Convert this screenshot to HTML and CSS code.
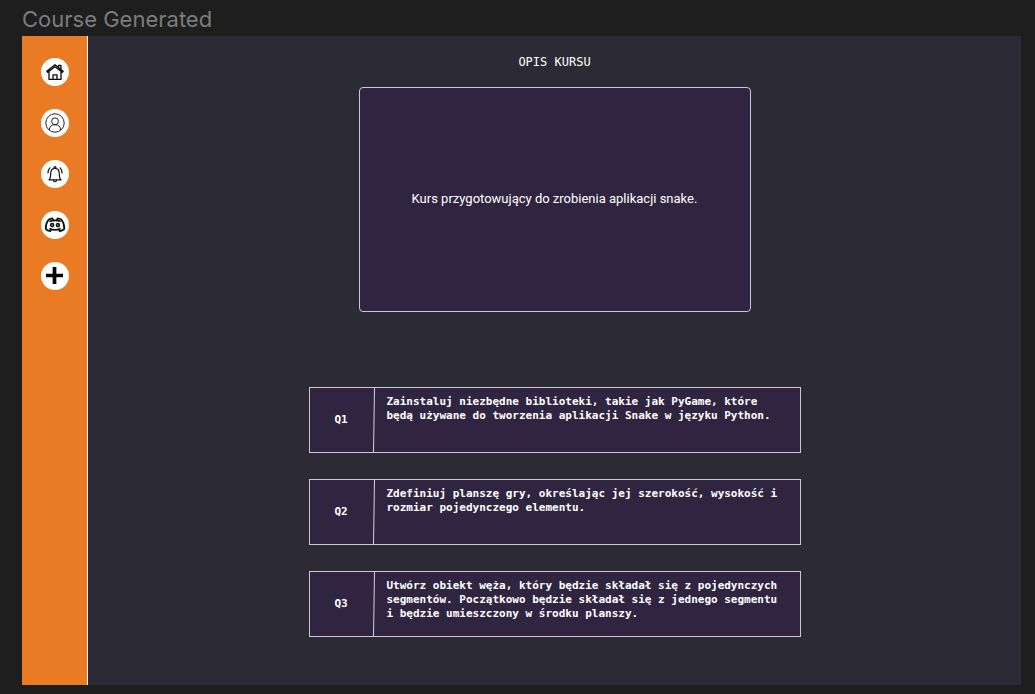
FILE: index.html
```html
<!DOCTYPE html>
<html lang="pl">
<head>
<meta charset="utf-8">
<meta name="viewport" content="width=device-width, initial-scale=1">
<title>Course Generated</title>
<link rel="stylesheet" href="styles.css">
</head>
<body class="canvas">
<header class="frame-label">Course Generated</header>
<div class="frame">
  <nav class="sidebar" aria-label="Menu">
    <a class="nav-link" href="#home" aria-label="Home">
      <svg class="icon" viewBox="0 0 28 28" fill="none" stroke="#080808" stroke-width="1.3" stroke-linejoin="round" stroke-linecap="round">
        <path d="M5.800 13.200 14 6.800l8.200 6.400-.9 1.100L14 8.800l-7.300 5.500zM8 13.700v7.600h12v-7.600M12 21.200v-4.400h4v4.400M17.600 9V7.300h2.300v3.600"/>
      </svg>
    </a>
    <a class="nav-link" href="#profile" aria-label="Profile">
      <svg class="icon" viewBox="0 0 28 28" fill="none" stroke="#222" stroke-width="1">
        <circle cx="14" cy="14" r="9.200"/><circle cx="14" cy="12.300" r="3.400"/><path d="M8.300 21c.2-3.400 2-5.300 5.700-5.300s5.500 1.900 5.700 5.300"/>
      </svg>
    </a>
    <a class="nav-link" href="#alerts" aria-label="Notifications">
      <svg class="icon" viewBox="0 0 28 28" fill="none" stroke="#111" stroke-width="1.200" stroke-linecap="round" stroke-linejoin="round">
        <path d="M8 19.800c1.500-1.200 1.700-2.800 1.700-6 0-3.200 1.600-5.400 4.300-5.400s4.300 2.200 4.300 5.400c0 3.200.2 4.800 1.700 6zM12.300 20c.3 2.300 3.100 2.300 3.400 0M13 8.300c-.3-2.300 2.300-2.300 2 0M8.900 7.900C7.500 9.200 7 10.800 7 13M19.100 7.900c1.400 1.300 1.900 2.900 1.900 5.100"/>
      </svg>
    </a>
    <a class="nav-link" href="#discord" aria-label="Discord">
      <svg class="icon" viewBox="0 0 28 28" fill="none" stroke="#0a120a" stroke-width="1.700" stroke-linejoin="round" stroke-linecap="round">
        <path d="M9 10.200c3.300-1.100 6.700-1.100 10 0M9 17.900c3.300 1.200 6.700 1.200 10 0M12 8.700l-.6-1.300c-1.400.2-2.700.6-3.900 1.300C5.400 11.500 4.500 14.500 4.700 18c1.400 1.100 2.900 1.800 4.500 2.300l1.300-2M16 8.700l.6-1.300c1.400.2 2.700.6 3.900 1.300 2.100 2.800 3 5.800 2.800 9.300-1.400 1.100-2.900 1.800-4.500 2.300l-1.300-2"/>
        <ellipse cx="11.100" cy="14.100" rx="1.400" ry="1.600"/><ellipse cx="16.900" cy="14.100" rx="1.400" ry="1.600"/>
      </svg>
    </a>
    <a class="nav-link" href="#add" aria-label="Add">
      <svg class="icon" viewBox="0 0 28 28" fill="none" stroke="#050508" stroke-width="3.700">
        <path d="M13.500 5v17M5 13.500h17"/>
      </svg>
    </a>
  </nav>
  <main class="content">
    <h1 class="title">OPIS KURSU</h1>
    <section class="description"><p class="description-text">Kurs przygotowujący do zrobienia aplikacji snake.</p></section>
    <ul class="tasks">
      <li class="task">
        <span class="task-number">Q1</span>
        <svg class="divider" viewBox="0 0 2 64" preserveAspectRatio="none"><path d="M1.500 0 .5 64"/></svg>
        <p class="task-text">Zainstaluj niezbędne biblioteki, takie jak PyGame, które będą używane do tworzenia aplikacji Snake w języku Python.</p>
      </li>
      <li class="task">
        <span class="task-number">Q2</span>
        <svg class="divider" viewBox="0 0 2 64" preserveAspectRatio="none"><path d="M1.500 0 .5 64"/></svg>
        <p class="task-text">Zdefiniuj planszę gry, określając jej szerokość, wysokość i rozmiar pojedynczego elementu.</p>
      </li>
      <li class="task">
        <span class="task-number">Q3</span>
        <svg class="divider" viewBox="0 0 2 64" preserveAspectRatio="none"><path d="M1.500 0 .5 64"/></svg>
        <p class="task-text">Utwórz obiekt węża, który będzie składał się z pojedynczych segmentów. Początkowo będzie składał się z jednego segmentu i będzie umieszczony w środku planszy.</p>
      </li>
    </ul>
  </main>
</div>
</body>
</html>
```
FILE: styles.css
```css
* { box-sizing: border-box; }

.canvas {
  display: flex;
  flex-direction: column;
  min-height: 100vh;
  margin: 0;
  padding: 0 14px 9px 22px;
  background: #1e1e1e;
  color: #fff;
  font-family: "DejaVu Sans Mono", monospace;
}

.frame-label {
  padding: 6px 0 4px;
  color: #7c7c7c;
  font: 22px/26px Inter, sans-serif;
}

.frame {
  display: flex;
  flex: 1;
  background: #2b2a35;
}

.sidebar {
  display: flex;
  flex: 0 0 66px;
  flex-direction: column;
  align-items: center;
  gap: 23px;
  padding-top: 22px;
  border-right: 1px solid #fff;
  background: #ea7b25;
}

.nav-link {
  display: flex;
  width: 28px;
  height: 28px;
  border-radius: 50%;
  background: #fff;
}

.icon {
  width: 28px;
  height: 28px;
}

.content {
  display: flex;
  flex: 1;
  flex-direction: column;
  align-items: center;
  min-width: 0;
  padding: 18px 24px 24px;
}

.title {
  margin: 0;
  font-size: 12px;
  font-weight: 400;
  line-height: 16px;
}

.description {
  display: flex;
  align-items: center;
  justify-content: center;
  width: 100%;
  max-width: 392px;
  min-height: 225px;
  margin-top: 17px;
  padding: 16px 16px 18px;
  border: 1px solid #c9c7cf;
  border-radius: 4px;
  background: #2f2540;
}

.description-text {
  margin: 0;
  font: 13px/16px Roboto, sans-serif;
}

.tasks {
  display: flex;
  flex-direction: column;
  gap: 26px;
  width: 100%;
  max-width: 492px;
  margin: 75px 0 0;
  padding: 0;
  list-style: none;
}

.task {
  display: flex;
  min-height: 66px;
  border: 1px solid #c9c7cf;
  background: #2f2540;
  font-size: 11px;
  font-weight: 700;
  line-height: 14px;
}

.task-number {
  flex: 0 0 63px;
  align-self: center;
  text-align: center;
}

.divider {
  flex: 0 0 2px;
  width: 2px;
  height: auto;
  fill: none;
  stroke: #d5d3da;
}

.task-text {
  flex: 1;
  margin: 0;
  padding: 7px 16px 7px 12px;
}
```
